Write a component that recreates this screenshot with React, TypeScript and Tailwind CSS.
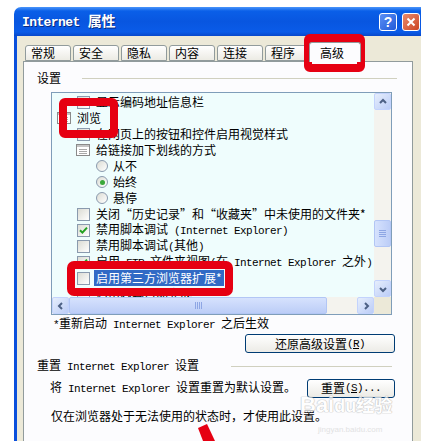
import React from "react";

function L({ children, bold = false }: { children: React.ReactNode; bold?: boolean }) {
  return (
    <span
      className={`font-['Liberation_Mono','Noto_Sans_CJK_SC',monospace] tracking-[-0.6px] ${
        bold ? "text-[13px] font-bold tracking-[-0.2px]" : "text-[11px]"
      }`}
    >
      {children}
    </span>
  );
}

function Box({ checked = false }: { checked?: boolean }) {
  return (
    <span className="w-[13px] h-[13px] border border-[#8a9aae] bg-linear-to-br from-[#dcdcd4] to-white flex items-center justify-center shrink-0">
      {checked && (
        <svg width="9" height="9" viewBox="0 0 9 9">
          <path d="M1 4.2 L3.4 6.6 L8 1.6" stroke="#21a121" strokeWidth="2" fill="none" />
        </svg>
      )}
    </span>
  );
}

function Radio({ checked = false }: { checked?: boolean }) {
  return (
    <span className="w-[12px] h-[12px] rounded-full border border-[#8a9aae] bg-linear-to-br from-[#dcdcd4] to-white flex items-center justify-center shrink-0">
      {checked && <span className="w-[5px] h-[5px] rounded-full bg-[#3aa83a]" />}
    </span>
  );
}

function ListIcon() {
  return (
    <svg width="14" height="12" viewBox="0 0 14 12" className="shrink-0">
      <rect x="0.5" y="0.5" width="13" height="11" fill="#fff" stroke="#8a8a8a" />
      <rect x="1" y="1" width="12" height="2" fill="#c4c4c4" />
      <path d="M3 5.5h8M3 7.5h8M3 9.5h8" stroke="#a8a8a8" />
    </svg>
  );
}

function Chevron({ dir }: { dir: "up" | "down" | "left" | "right" }) {
  const d = {
    up: "M2 6 L5 3 L8 6",
    down: "M2 4 L5 7 L8 4",
    left: "M6 2 L3 5 L6 8",
    right: "M4 2 L7 5 L4 8",
  }[dir];
  return (
    <svg width="10" height="10" viewBox="0 0 10 10">
      <path d={d} stroke="#4d6185" strokeWidth="2" fill="none" />
    </svg>
  );
}

function ScrollBtn({ dir }: { dir: "up" | "down" | "left" | "right" }) {
  return (
    <div className="w-[17px] h-[17px] shrink-0 rounded-[2px] border border-[#c3d3fd] bg-linear-to-br from-[#e6eefc] to-[#bccdf7] flex items-center justify-center">
      <Chevron dir={dir} />
    </div>
  );
}

type Row = {
  kind: "box" | "tree" | "list" | "radio";
  checked?: boolean;
  selected?: boolean;
  text: React.ReactNode;
};

const rows: Row[] = [
  { kind: "box", text: "显示编码地址信息栏" },
  { kind: "tree", text: "浏览" },
  { kind: "box", text: "在网页上的按钮和控件启用视觉样式" },
  { kind: "list", text: "给链接加下划线的方式" },
  { kind: "radio", text: "从不" },
  { kind: "radio", checked: true, text: "始终" },
  { kind: "radio", text: "悬停" },
  { kind: "box", text: "关闭“历史记录”和“收藏夹”中未使用的文件夹*" },
  {
    kind: "box",
    checked: true,
    text: (
      <>
        禁用脚本调试<L> (Internet Explorer)</L>
      </>
    ),
  },
  {
    kind: "box",
    text: (
      <>
        禁用脚本调试<L>(</L>其他<L>)</L>
      </>
    ),
  },
  {
    kind: "box",
    checked: true,
    text: (
      <>
        启用<L> FTP </L>文件夹视图<L>(</L>在<L> Internet Explorer </L>之外<L>)</L>
      </>
    ),
  },
  { kind: "box", selected: true, text: "启用第三方浏览器扩展*" },
  { kind: "box", text: "启用内容自动完成" },
];

function ListRow({ row }: { row: Row }) {
  const pad =
    row.kind === "tree" ? "pl-[5px] gap-[6px]" : row.kind === "radio" ? "pl-[44px] gap-[5px]" : "pl-[25px] gap-[6px]";
  return (
    <div className={`flex items-center h-[16px] shrink-0 whitespace-nowrap ${pad}`}>
      {row.kind === "box" && <Box checked={row.checked} />}
      {row.kind === "radio" && <Radio checked={row.checked} />}
      {(row.kind === "tree" || row.kind === "list") && (
        <span className={row.kind === "list" ? "ml-[-1px]" : ""}>
          <ListIcon />
        </span>
      )}
      <span
        className={
          row.selected ? "bg-[#316ac5] text-white px-[2px] ml-[-2px] leading-[16px]" : "leading-[16px]"
        }
      >
        {row.text}
      </span>
    </div>
  );
}

function Tab({ label, w, selected = false }: { label: string; w: string; selected?: boolean }) {
  return (
    <div
      className={`${w} shrink-0 border border-[#919b9c] rounded-t-[3px] pl-[5px] flex items-center leading-[16px] ${
        selected
          ? "h-[20px] bg-[#fcfcfe] border-b-0 -mb-px relative z-10 pl-[10px] -mx-[2px]"
          : "h-[16px] bg-linear-to-b from-white to-[#ecebe4]"
      }`}
    >
      {label}
    </div>
  );
}

export default function App() {
  return (
    <div className="relative w-[421px] h-[441px] overflow-hidden bg-white text-[12px] text-black font-['Noto_Sans_CJK_SC',sans-serif]">
      <div className="ml-[14px] mt-[7px] w-[414px]">
        {/* title bar */}
        <div className="h-[29px] rounded-t-[7px] bg-[linear-gradient(180deg,#4a95fa_0%,#0a5fe8_14%,#0856e0_50%,#0a5be8_86%,#0848ca_100%)] flex items-center pl-[8px] pr-[8px]">
          <div className="text-white font-bold [text-shadow:1px_1px_0_#0a2a80] flex items-baseline gap-[2px]">
            <L bold>Internet</L>
            <span className="text-[14px] font-bold ml-[6px]">属性</span>
          </div>
          <div className="ml-auto flex items-center gap-[5px]">
            <div className="w-[18px] h-[18px] rounded-[3px] border border-white bg-linear-to-br from-[#5b8ff5] to-[#2159d8] text-white font-bold text-[14px] leading-none flex items-center justify-center font-['Liberation_Sans',sans-serif]">
              ?
            </div>
            <div className="w-[18px] h-[18px] rounded-[3px] border border-white bg-linear-to-br from-[#e9896a] to-[#cc4420] flex items-center justify-center">
              <svg width="10" height="10" viewBox="0 0 10 10">
                <path d="M1.5 1.5 L8.5 8.5 M8.5 1.5 L1.5 8.5" stroke="#fff" strokeWidth="2" />
              </svg>
            </div>
          </div>
        </div>

        {/* body */}
        <div className="h-[420px] bg-[#ece9d8] border-l-[3px] border-[#0a4fdc] pl-[6px]">
          {/* tabs */}
          <div className="h-[25px] flex items-end pl-[2px] gap-[2px]">
            <Tab label="常规" w="w-[46px]" />
            <Tab label="安全" w="w-[46px]" />
            <Tab label="隐私" w="w-[46px]" />
            <Tab label="内容" w="w-[46px]" />
            <Tab label="连接" w="w-[46px]" />
            <Tab label="程序" w="w-[44px]" />
            <Tab label="高级" w="w-[52px]" selected />
          </div>

          {/* panel */}
          <div className="w-[390px] h-[395px] border border-[#919b9c] bg-[#fcfcfe] flex flex-col">
            <div className="mt-[8px] h-[16px] flex items-center">
              <span className="ml-[13px] leading-[16px]">设置</span>
              <div className="ml-[21px] mr-[15px] flex-1 h-px bg-[#d0d0bf]" />
            </div>

            {/* listbox */}
            <div className="mt-[6px] ml-[27px] w-[341px] h-[223px] border border-[#7f9db9] bg-[#effdfd] flex flex-col">
              <div className="h-[204px] flex">
                <div className="flex-1 overflow-hidden pt-[1px] flex flex-col">
                  {rows.map((r, i) => (
                    <ListRow key={i} row={r} />
                  ))}
                </div>
                <div className="w-[17px] flex flex-col bg-[#f4f3ee]">
                  <ScrollBtn dir="up" />
                  <div className="h-[110px]" />
                  <div className="h-[27px] rounded-[2px] border border-[#b2c6f5] bg-linear-to-r from-[#d6e2fd] to-[#bccdf7] flex flex-col items-center justify-center gap-[1px]">
                    <div className="w-[7px] h-px bg-[#8ea6e4]" />
                    <div className="w-[7px] h-px bg-[#8ea6e4]" />
                    <div className="w-[7px] h-px bg-[#8ea6e4]" />
                    <div className="w-[7px] h-px bg-[#8ea6e4]" />
                  </div>
                  <div className="flex-1" />
                  <ScrollBtn dir="down" />
                </div>
              </div>
              <div className="h-[17px] flex bg-[#f4f3ee]">
                <ScrollBtn dir="left" />
                <div className="w-[258px] rounded-[2px] border border-[#b2c6f5] bg-linear-to-b from-[#d6e2fd] to-[#bccdf7] flex items-center justify-center gap-[1px]">
                  <div className="h-[7px] w-px bg-[#8ea6e4]" />
                  <div className="h-[7px] w-px bg-[#8ea6e4]" />
                  <div className="h-[7px] w-px bg-[#8ea6e4]" />
                  <div className="h-[7px] w-px bg-[#8ea6e4]" />
                </div>
                <div className="flex-1" />
                <ScrollBtn dir="right" />
                <div className="w-[17px] bg-[#ece9d8]" />
              </div>
            </div>

            <div className="ml-[29px] h-[16px] leading-[16px] whitespace-nowrap">
              <L>*</L>重新启动<L> Internet Explorer </L>之后生效
            </div>

            <div className="mt-[3px] mr-[17px] self-end w-[150px] h-[19px] rounded-[3px] border border-[#003c74] bg-linear-to-b from-white to-[#ecebe6] flex items-center justify-center leading-[16px]">
              还原高级设置
              <L>
                (<span className="underline">R</span>)
              </L>
            </div>

            <div className="mt-[5px] h-[16px] flex items-center whitespace-nowrap">
              <span className="ml-[13px] leading-[16px]">
                重置<L> Internet Explorer </L>设置
              </span>
              <div className="ml-[32px] mr-[20px] flex-1 h-px bg-[#d0d0bf]" />
            </div>

            <div className="mt-[5px] h-[18px] flex items-center whitespace-nowrap">
              <span className="ml-[26px] leading-[16px]">
                将<L> Internet Explorer </L>设置重置为默认设置。
              </span>
              <div className="ml-auto mr-[17px] w-[88px] h-[19px] rounded-[3px] border border-[#003c74] bg-linear-to-b from-white to-[#ecebe6] flex items-center justify-center leading-[16px]">
                重置
                <L>
                  (<span className="underline">S</span>)...
                </L>
              </div>
            </div>

            <div className="mt-[11px] ml-[27px] h-[16px] leading-[16px] whitespace-nowrap">
              仅在浏览器处于无法使用的状态时，才使用此设置。
            </div>
          </div>
        </div>
      </div>

      {/* red annotation boxes */}
      <div className="absolute left-[304px] top-[34px] w-[61px] h-[38px] border-[8px] border-[#e60012] rounded-[6px]" />
      <div className="absolute left-[59px] top-[98px] w-[59px] h-[40px] border-[8px] border-[#e60012] rounded-[6px]" />
      <div className="absolute left-[67px] top-[261px] w-[166px] h-[35px] border-[8px] border-[#e60012] rounded-[7px]" />

      {/* red arrow tail */}
      <svg className="absolute left-0 top-0" width="421" height="441" viewBox="0 0 421 441">
        <polygon points="198,428 207,424 215,441 203,441" fill="#e60012" />
      </svg>

      {/* watermark */}
      <div className="absolute left-[300px] top-[392px] opacity-70 text-white font-bold text-[22px] leading-[24px] font-['Liberation_Sans',sans-serif] [text-shadow:0_0_1px_#aaa,0_0_1px_#aaa,0_0_1px_#aaa] whitespace-nowrap">
        Bai<span className="text-[18px]">du</span>
        <span className="text-[18px] font-['Noto_Sans_CJK_SC',sans-serif]">经验</span>
      </div>
      <div className="absolute left-[318px] top-[425px] opacity-50 text-[#c8c8c8] text-[8px] leading-[10px] font-['Liberation_Sans',sans-serif]">
        jingyan.baidu.com
      </div>
    </div>
  );
}
